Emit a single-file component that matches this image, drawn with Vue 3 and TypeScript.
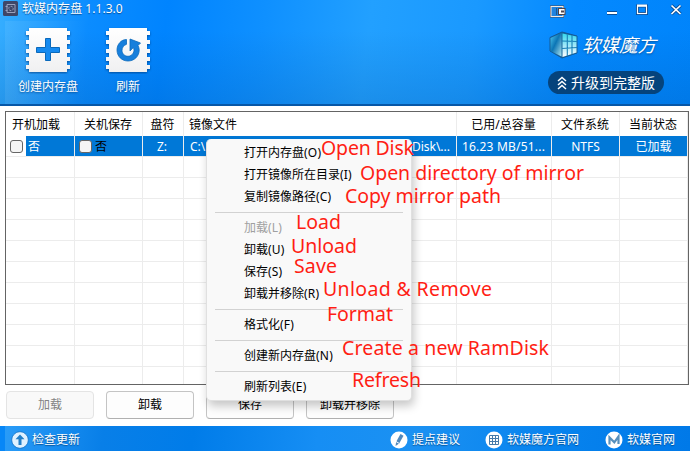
<script setup lang="ts">
interface MenuItem { label: string; key: string; disabled?: boolean }
interface Note { text: string; x: number; y: number; w: number }

const columns: string[] = ['开机加载', '关机保存', '盘符', '镜像文件', '已用/总容量', '文件系统', '当前状态']
const emptyRows: number[] = Array.from({ length: 11 }, (_, i) => i)

const menu: MenuItem[][] = [
  [
    { label: '打开内存盘', key: 'O' },
    { label: '打开镜像所在目录', key: 'I' },
    { label: '复制镜像路径', key: 'C' },
  ],
  [
    { label: '加载', key: 'L', disabled: true },
    { label: '卸载', key: 'U' },
    { label: '保存', key: 'S' },
    { label: '卸载并移除', key: 'R' },
  ],
  [{ label: '格式化', key: 'F' }],
  [{ label: '创建新内存盘', key: 'N' }],
  [{ label: '刷新列表', key: 'E' }],
]

const notes: Note[] = [
  { text: 'Open Disk', x: 321, y: 155, w: 93 },
  { text: 'Open directory of mirror', x: 360, y: 180, w: 224 },
  { text: 'Copy mirror path', x: 345, y: 202.5, w: 156 },
  { text: 'Load', x: 296, y: 229, w: 45 },
  { text: 'Unload', x: 291, y: 253, w: 66 },
  { text: 'Save', x: 294, y: 273, w: 43 },
  { text: 'Unload & Remove', x: 323, y: 296, w: 169 },
  { text: 'Format', x: 327, y: 321, w: 66 },
  { text: 'Create a new RamDisk', x: 342, y: 355, w: 207 },
  { text: 'Refresh', x: 352, y: 386.5, w: 69 },
]
</script>

<template>
  <div class="window">
    <header class="head">
      <div class="titlebar">
        <svg class="app-icon" width="15" height="15" viewBox="0 0 15 15">
          <rect width="15" height="15" rx="1.5" fill="#3f4768" />
          <path d="M4 3.5h8v8H4z" fill="none" stroke="#9aa2bd" stroke-width="1" />
          <circle cx="8" cy="7.5" r="2.2" fill="none" stroke="#9aa2bd" stroke-dasharray="2 1" />
          <path d="M2.5 5.5h2M2.5 9.5h2" stroke="#9aa2bd" />
        </svg>
        <span class="title">软媒内存盘 1.1.3.0</span>
        <svg class="win-controls" width="134" height="20" viewBox="0 0 134 20">
          <rect x="1" y="6.5" width="12" height="10" fill="#2196f3" stroke="#4b4650" stroke-width="2" />
          <rect x="1" y="6.5" width="12" height="10" fill="#2083e0" stroke="#f5e9df" />
          <path d="M6.5 8v7M9 8v7" stroke="#20588f" />
          <rect x="8.5" y="8.5" width="6.5" height="6" fill="#fff" stroke="#51454a" />
          <rect x="11" y="10.5" width="3" height="2" fill="#51454a" />
          <path d="M57 13h10" stroke="#0a4c94" stroke-width="4" />
          <path d="M57 13h10" stroke="#fff" stroke-width="2" />
          <rect x="87.5" y="6" width="9" height="7.5" fill="none" stroke="#0a4c94" stroke-width="3" />
          <rect x="87.5" y="6" width="9" height="7.5" fill="none" stroke="#fff" stroke-width="1.2" />
          <path d="M87 5.5h10" stroke="#fff" stroke-width="2" />
          <path d="M121.500 5.500l9 8.500M130.500 5.500l-9 8.500" stroke="#0a4c94" stroke-width="3.200" />
          <path d="M121.500 5.500l9 8.500M130.500 5.500l-9 8.500" stroke="#fff" stroke-width="1.700" />
        </svg>
      </div>
      <div class="toolbar">
        <button class="tool">
          <svg width="48" height="48" viewBox="0 0 48 48">
            <defs>
              <linearGradient id="chip" x1="0" y1="0" x2="0" y2="1">
                <stop offset="0" stop-color="#fff" /><stop offset="1" stop-color="#f0f0f1" />
              </linearGradient>
            </defs>
            <path class="chip" fill="url(#chip)" d="M5 2H43V5H46V9H43V14H46V18H43V23H46V27H43V31H46V35H43V39H46V43H43V46H5V43H2V39H5V35H2V31H5V27H2V23H5V18H2V14H5V9H2V5H5Z" />
            <path d="M21.500 12.500h5v9h9v5h-9v8h-5v-8h-9v-5h9z" fill="#158af0" stroke="#0a69bb" />
          </svg>
          <span>创建内存盘</span>
        </button>
        <button class="tool second">
          <svg width="48" height="48" viewBox="0 0 48 48">
            <path class="chip" fill="url(#chip)" d="M5 2H43V5H46V9H43V14H46V18H43V23H46V27H43V31H46V35H43V39H46V43H43V46H5V43H2V39H5V35H2V31H5V27H2V23H5V18H2V14H5V9H2V5H5Z" />
            <path d="M22.500 13.500C17 13.500 13 18.500 13 24C13 30.500 18 35 24 35C30 35 35.200 30.500 35.200 24C35.200 22.500 34.800 21 34 19.500L36.500 17L26 13V25L29.300 21.500C31.500 25 28.500 30.300 24 30.300C20.500 30.300 18 27.500 18 24.300C18 21.500 19.800 19.200 22.500 18.300Z" fill="#177fdc" stroke="#0a69bb" stroke-width=".8" />
          </svg>
          <span>刷新</span>
        </button>
        <div class="brand">
          <div class="brand-row">
            <svg width="30" height="28" viewBox="0 0 30 28">
              <defs>
                <linearGradient id="side" x1="0" y1="0" x2="1" y2="1">
                  <stop offset="0" stop-color="#50c8ef" /><stop offset=".45" stop-color="#0c75b5" /><stop offset="1" stop-color="#aee4ee" />
                </linearGradient>
                <linearGradient id="face" x1="0" y1="0" x2="0" y2="1">
                  <stop offset="0" stop-color="#35d8ec" /><stop offset=".55" stop-color="#a9e9fa" /><stop offset="1" stop-color="#fff" />
                </linearGradient>
              </defs>
              <path d="M1 6.500L13 1L28 5V22L13 27L1 20Z" fill="#17659b" stroke="#145a96" />
              <path d="M1.500 7L12.500 2V25.500L1.500 20Z" fill="url(#side)" />
              <path d="M13.500 2.500L27.500 5.500V21.500L13.500 26Z" fill="url(#face)" />
              <path d="M18.300 3V25M23 4V23.500M13 10L28 10.500M13 17.500L28 16.500" stroke="#1980b7" stroke-width="1.100" />
            </svg>
            <span class="brand-name">软媒魔方</span>
          </div>
          <div class="upgrade">
            <svg width="10" height="14" viewBox="0 0 10 14"><path d="M1 5l4-3.500L9 5M1 9l4-3.500L9 9M1 13l4-3.500L9 13" fill="none" stroke="#fff" stroke-width="1.500" /></svg>
            <span>升级到完整版</span>
          </div>
        </div>
      </div>
    </header>

    <main class="body">
      <div class="table">
        <div class="row th"><div v-for="c in columns" :key="c" class="cell">{{ c }}</div></div>
        <div class="row selected">
          <div class="cell check-cell first"><i class="box"></i><span class="no">否</span></div>
          <div class="cell check-cell"><i class="box"></i><span class="dark">否</span></div>
          <div class="cell drive">Z:</div>
          <div class="cell path"><span>C:\</span><span>Disk\...</span></div>
          <div class="cell size">16.23 MB/51...</div>
          <div class="cell">NTFS</div>
          <div class="cell">已加载</div>
        </div>
        <div v-for="r in emptyRows" :key="r" class="row"><div v-for="c in columns" :key="c" class="cell"></div></div>
      </div>
      <div class="actions">
        <button class="btn" disabled>加载</button>
        <button class="btn">卸载</button>
        <button class="btn">保存</button>
        <button class="btn">卸载并移除</button>
      </div>
    </main>

    <footer class="foot">
      <a class="link update">
        <svg width="18" height="18" viewBox="0 0 18 18"><circle cx="9" cy="9" r="8.300" fill="#dff1ff" stroke="#0768bf" stroke-width=".7" /><path d="M9 3.500l4.500 4.800h-3V14h-3V8.300h-3z" fill="#227fc8" /></svg>
        检查更新
      </a>
      <a class="link advice">
        <svg width="18" height="18" viewBox="0 0 18 18"><circle cx="9" cy="9" r="8.500" fill="#fff" /><path d="M10.500 3l3 1.800-4.300 7.700-3.700 2.500.7-4.300z" fill="#5189bd" /><path d="M6 10.500l3 1.800" stroke="#fff" /></svg>
        提点建议
      </a>
      <a class="link cube">
        <svg width="18" height="18" viewBox="0 0 18 18"><circle cx="9" cy="9" r="8.500" fill="#fff" /><path d="M4.500 4.500h9v9h-9zM7.500 4.500v9M10.500 4.500v9M4.500 7.500h9M4.500 10.500h9" fill="none" stroke="#477ba9" /></svg>
        软媒魔方官网
      </a>
      <a class="link site">
        <svg width="18" height="18" viewBox="0 0 18 18"><circle cx="9" cy="9" r="8.500" fill="#fff" /><path d="M4.500 13.500V6.500L9.300 11.300L13.500 5.500V13" fill="none" stroke="#5790bd" stroke-width="2.200" /></svg>
        软媒官网
      </a>
    </footer>

    <div class="menu">
      <template v-for="(group, g) in menu" :key="g">
        <hr v-if="g > 0" class="sep" />
        <div v-for="item in group" :key="item.key" class="item" :class="{ off: item.disabled }">{{ item.label }}<span class="key">({{ item.key }})</span></div>
      </template>
    </div>

    <svg class="notes" width="690" height="451" viewBox="0 0 690 451">
      <text v-for="n in notes" :key="n.text" :x="n.x" :y="n.y" :textLength="n.w">{{ n.text }}</text>
    </svg>
  </div>
</template>

<style>
body { margin: 0; overflow: hidden; }
</style>

<style scoped>
* { box-sizing: border-box; }
.window {
  position: relative; width: 690px; height: 451px; display: flex; flex-direction: column;
  background: #fff; color: #000; font: 12px/16px "Noto Sans", "Noto Sans CJK SC", sans-serif; overflow: hidden;
}
button { font: inherit; padding: 0; margin: 0; }
svg { display: block; flex: none; }
.head {
  height: 106px; color: #fff; border-bottom: 2px solid #0757a7;
  background:
    linear-gradient(180deg, rgba(0, 60, 140, 0) 30%, rgba(0, 75, 150, .2) 100%),
    linear-gradient(97deg, #36aeff 0, #0b8cff 13%, #0084ff 24%, #0f90ff 38%, #22a0ff 53%, #1a99ff 68%, #0489ff 82%, #0084fb 100%);
}
.titlebar { height: 21px; display: flex; padding-left: 3px; }
.app-icon { margin-top: 1px; }
.title { margin: 1px 0 0 4px; text-shadow: 0 1px 1px #05509a; letter-spacing: .04px; }
.win-controls { margin-left: auto; margin-right: 6px; }
.toolbar { height: 83px; margin-left: 5px; display: flex; background: linear-gradient(90deg, rgba(255, 255, 255, .07), rgba(255, 255, 255, 0) 12%); }
.tool { width: 80px; margin-left: 3px; padding-top: 5px; border: 0; background: none; color: #fff; display: flex; flex-direction: column; align-items: center; }
.tool.second { margin-left: 0; }
.tool span { margin-top: 5px; text-shadow: 0 1px 2px #05509a; }
.chip { filter: drop-shadow(0 1px 1px rgba(0, 50, 110, .65)); }
.brand { margin-left: auto; width: 142px; padding-top: 10px; }
.brand-row { display: flex; align-items: center; height: 28px; padding-left: 1px; }
.brand-name { font-size: 18.500px; line-height: 28px; font-style: italic; margin-left: 3px; text-shadow: 0 1px 2px #05509a; }
.upgrade { margin-top: 12px; width: 116px; height: 23px; border-radius: 12px; background: #05437c; display: flex; align-items: center; padding-left: 9px; font-size: 14px; gap: 4px; white-space: nowrap; }
.body { height: 320px; padding: 5px 1px 0 5px; }
.table { height: 274px; border: 1px solid #646464; overflow: hidden; }
.row { display: grid; grid-template-columns: 69px 68px 41px 273px 95px 68px 68px; height: 21px; }
.cell { border-right: 1px solid #ececec; border-bottom: 1px solid #ececec; min-width: 0; display: flex; align-items: center; justify-content: center; white-space: nowrap; }
.th { height: 24px; }
.th .cell { border-bottom: 0; padding: 1px 1px 0 0; }
.th .cell:first-child { justify-content: flex-start; padding-left: 6px; }
.th .cell:nth-child(4) { justify-content: flex-start; padding-left: 5px; }
.selected .cell { background: #0078d7; color: #fff; padding-top: 1px; }
.selected .check-cell { justify-content: flex-start; padding-left: 4px; }
.selected .first { background: linear-gradient(90deg, #fff 20px, #0078d7 20px); }
.box { width: 13px; height: 13px; border: 1px solid #666; border-radius: 3px; background: #f5f5f5; }
.no { margin-left: 5px; }
.dark { color: #000; margin-left: 3px; }
.selected .drive { padding-right: 2px; }
.selected .path { justify-content: space-between; padding: 1px 6px 0; }
.selected .size { letter-spacing: .2px; padding-right: 1px; }
.actions { display: flex; gap: 12px; padding: 6px 0 0 1px; }
.btn { width: 88px; height: 28px; border: 1px solid #c4c4c4; border-bottom-color: #b0b0b0; border-radius: 4px; background: #fdfdfd; color: #000; }
.btn:disabled { color: #838383; border-color: #e4e4e4; background: #f9f9f9; }
.foot {
  height: 25px; color: #fff; display: flex; align-items: center; padding-left: 11px; padding-top: 2px;
  background: linear-gradient(90deg, #0787f7 5px, rgba(0, 0, 0, 0) 5px), linear-gradient(97deg, #2b9df8 0, #087fe8 15%, #007ce9 28%, #168ef4 46%, #1b91f2 60%, #0783ee 80%, #0079e8 100%);
}
.link { display: flex; align-items: center; gap: 4px; text-shadow: 0 1px 1px #075194; white-space: nowrap; }
.update { gap: 3px; }
.advice { margin-left: 310px; }
.cube { margin-left: 25px; }
.site { margin-left: 26px; }
.menu {
  position: absolute; left: 206px; top: 139px; width: 206px; height: 262px; padding-top: 3px;
  background: #f9f9f9; border: 1px solid #e0e0e0; border-top-width: 0; border-radius: 5px; box-shadow: 2px 5px 10px rgba(0, 0, 0, .22);
}
.item { height: 22px; line-height: 22px; padding-left: 37px; }
.key { letter-spacing: .2px; }
.off { color: #a0a0a0; }
.sep { height: 1px; margin: 4px 8px; border: 0; background: #d2d2d2; }
.notes { position: absolute; left: 0; top: 0; pointer-events: none; }
.notes text { font-size: 19.500px; fill: #ff1e14; }
</style>
